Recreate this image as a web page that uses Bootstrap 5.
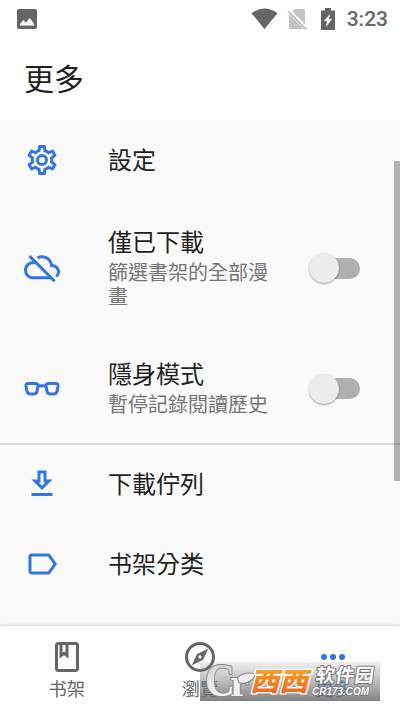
<!DOCTYPE html>
<html lang="zh-Hant">
<head>
<meta charset="utf-8">
<meta name="viewport" content="width=device-width, initial-scale=1">
<title>更多</title>
<link href="https://cdn.jsdelivr.net/npm/bootstrap@5.3.0/dist/css/bootstrap.min.css" rel="stylesheet">
<style>
  body { font-family: Roboto, "Noto Sans CJK SC", sans-serif; color: #1f1f1f; background: #fff; }
  svg { display: block; flex: none; }
  .screen { width: 400px; height: 711px; }
  .status-bar { height: 37px; padding: 0 12px 0 17px; color: #666; }
  .clock { font-size: 21px; font-weight: 500; line-height: 37px; color: #666; margin-left: 11px; padding-top: 1px; }
  .page-title { height: 83px; padding: 1px 24px 0; font-size: 30px; font-weight: 400; line-height: 83px; }
  .prefs { height: 506px; background: #fafafa; }
  .pref { padding: 0 40px 0 24px; }
  .pref-icon { width: 36px; height: 36px; fill: #3375e1; margin-right: 48px; }
  .pref-name { font-size: 24px; line-height: 30px; padding-top: 2px; }
  .pref-name.stacked { padding: 0 0 3px; }
  .pref-note { font-size: 20px; line-height: 24px; color: #757575; }
  .h-a { height: 80px; } .h-b { height: 136px; } .h-c { height: 105px; }
  .h-d { height: 77px; } .h-e { height: 84px; }
  .rule { height: 2px; background: #d9d9d9; margin-top: 2px; }
  .toggle { width: 51px; height: 34px; }
  .toggle-track { width: 40px; height: 21px; border-radius: 11px; background: #b0b0b0; }
  .toggle-knob { width: 30px; height: 30px; background: #ececec; left: 0; top: 2px; box-shadow: 0 1px 2px rgba(0,0,0,.35); }
  .scroll-thumb { width: 6px; height: 320px; right: 0; top: 41px; background: rgba(0,0,0,.29); }
  .tabs { height: 85px; background: #fff; box-shadow: 0 -1px 3px rgba(0,0,0,.16); color: #666; }
  .tab-item { padding-top: 13px; font-size: 18.300px; line-height: 30px; }
  .tab-item svg { width: 36px; height: 36px; fill: #666; }
  .tab-item.on { color: #3375e1; } .tab-item.on svg { fill: #3375e1; }
  .stamp { left: 200px; top: 655px; width: 184px; height: 50px; overflow: visible; }
</style>
<script src="https://cdn.jsdelivr.net/npm/bootstrap@5.3.0/dist/js/bootstrap.bundle.min.js"></script>
</head>
<body class="overflow-hidden">
<div class="screen d-flex flex-column position-relative overflow-hidden">
  <header>
    <div class="status-bar d-flex align-items-center">
      <svg width="20" height="20" viewBox="0 0 20 20"><rect width="20" height="20" rx="2" fill="#666"/><path d="M3 16.500v-1.600l3.400-4 2.400 2.800 4-4.700 4.400 6v1.500z" fill="#fff"/></svg>
      <svg class="ms-auto" width="27" height="22" viewBox="0 0 27 22"><path d="M.5 5.200Q13.500-4 26.500 5.200L13.500 21z" fill="#666"/></svg>
      <svg width="21" height="22" viewBox="0 0 21 22" style="margin-left:9px"><path d="M2 6.500L8 1h8q2 0 2 2v16q0 2-2 2H4q-2 0-2-2z" fill="#c4c4c4"/><path d="M0 1l20 20" stroke="#fff" stroke-width="4"/><path d="M1 3l18.500 18.500" stroke="#bbb" stroke-width="1.700"/></svg>
      <svg width="16" height="22" viewBox="0 0 16 22" style="margin-left:12px"><path d="M1 2.500h4V0h6v2.500h4V22H1z" fill="#666"/><path d="M10 6l-6 7h3l-1 6 6-8H9z" fill="#fff"/></svg>
      <span class="clock">3:23</span>
    </div>
    <h1 class="page-title m-0">更多</h1>
  </header>

  <main class="prefs position-relative overflow-hidden">
    <div class="pref h-a d-flex align-items-center">
      <svg class="pref-icon" viewBox="0 0 24 24"><path d="M19.430 12.980c.04-.32.07-.64.07-.98 0-.34-.03-.66-.07-.98l2.110-1.650c.19-.15.24-.42.12-.64l-2-3.460c-.09-.16-.26-.25-.44-.25-.06 0-.12.01-.17.03l-2.490 1c-.52-.4-1.080-.73-1.690-.98l-.38-2.650C14.460 2.180 14.250 2 14 2h-4c-.25 0-.46.18-.49.42l-.38 2.650c-.61.25-1.170.59-1.690.98l-2.490-1c-.06-.02-.12-.03-.18-.03-.17 0-.34.09-.43.25l-2 3.460c-.13.22-.07.49.12.64l2.110 1.650c-.04.32-.07.65-.07.98 0 .33.03.66.07.98l-2.110 1.650c-.19.15-.24.42-.12.64l2 3.460c.09.16.26.25.44.25.06 0 .12-.01.17-.03l2.490-1c.52.4 1.080.73 1.690.98l.38 2.650c.03.24.24.42.49.42h4c.25 0 .46-.18.49-.42l.38-2.650c.61-.25 1.170-.59 1.690-.98l2.490 1c.06.02.12.03.18.03.17 0 .34-.09.43-.25l2-3.460c.12-.22.07-.49-.12-.64zM17.450 11.270c.04.31.05.52.05.73 0 .21-.02.43-.05.73l-.14 1.130.89.7 1.080.84-.7 1.210-1.270-.51-1.040-.42-.9.68c-.43.32-.84.56-1.250.73l-1.060.43-.16 1.130-.2 1.350h-1.400l-.19-1.350-.16-1.130-1.060-.43c-.43-.18-.83-.41-1.230-.71l-.91-.7-1.060.43-1.270.51-.7-1.210 1.080-.84.89-.7-.14-1.130c-.03-.31-.05-.54-.05-.74s.02-.43.05-.73l.14-1.130-.89-.7-1.080-.84.7-1.210 1.270.51 1.040.42.9-.68c.43-.32.84-.56 1.250-.73l1.060-.43.16-1.130.2-1.350h1.390l.19 1.350.16 1.130 1.060.43c.43.18.83.41 1.230.71l.91.7 1.060-.43 1.270-.51.7 1.210-1.070.85-.89.7zM12 8a4 4 0 100 8 4 4 0 000-8zm0 6a2 2 0 110-4 2 2 0 010 4z" fill-rule="evenodd"/></svg>
      <div class="pref-name">設定</div>
    </div>
    <div class="pref h-b d-flex align-items-center">
      <svg class="pref-icon" viewBox="0 0 24 24"><path transform="translate(0 .5)" d="M19.350 10.040C18.670 6.590 15.640 4 12 4c-1.330 0-2.570.36-3.650.97l1.490 1.490C10.510 6.170 11.230 6 12 6c3.040 0 5.500 2.460 5.500 5.500v.5H19c1.660 0 3 1.340 3 3 0 .99-.48 1.850-1.210 2.400l1.410 1.410c1.090-.92 1.800-2.270 1.800-3.810 0-2.640-2.050-4.780-4.650-4.960zM3 5.270l2.770 2.770h-.42C2.340 8.360 0 10.910 0 14c0 3.310 2.690 6 6 6h11.730l2 2 1.410-1.410L4.410 3.860 3 5.270zM7.730 10l8 8H6c-2.210 0-4-1.790-4-4s1.790-4 4-4h1.730z" style="translate:0 -1px"/></svg>
      <div class="flex-grow-1"><div class="pref-name stacked">僅已下載</div><div class="pref-note">篩選書架的全部漫<br>畫</div></div>
      <div class="toggle position-relative d-flex align-items-center justify-content-end"><div class="toggle-track"></div><div class="toggle-knob position-absolute rounded-circle"></div></div>
    </div>
    <div class="pref h-c d-flex align-items-center">
      <svg class="pref-icon" viewBox="0 0 36 36"><path d="M4 12.500H11q3 0 3 2l-.7 4.500q-.5 4-3.500 4H6.500q-3.200 0-3.900-4L2 14.500q-.2-2 2-2zM32 12.500H25q-3 0-3 2l.7 4.500q.5 4 3.500 4h3.300q3.200 0 3.900-4l.6-4.500q.2-2-2-2zM13.500 15.500q4.500-1.500 9 0" fill="none" stroke="#3375e1" stroke-width="3"/></svg>
      <div class="flex-grow-1"><div class="pref-name stacked">隱身模式</div><div class="pref-note">暫停記錄閱讀歷史</div></div>
      <div class="toggle position-relative d-flex align-items-center justify-content-end"><div class="toggle-track"></div><div class="toggle-knob position-absolute rounded-circle"></div></div>
    </div>
    <div class="rule"></div>
    <div class="pref h-d d-flex align-items-center">
      <svg class="pref-icon" viewBox="0 0 24 24"><path d="M19 9h-4V3H9v6H5l7 7 7-7zm-8 2V5h2v6h1.170L12 13.170 9.830 11H11zm-6 7h14v2H5z"/></svg>
      <div class="pref-name">下載佇列</div>
    </div>
    <div class="pref h-e d-flex align-items-center">
      <svg class="pref-icon" viewBox="0 0 24 24"><path d="M17.630 5.840C17.270 5.330 16.670 5 16 5L5 5.010C3.900 5.010 3 5.900 3 7v10c0 1.100.9 1.990 2 1.990L16 19c.67 0 1.270-.33 1.630-.84L22 12l-4.370-6.160zM16 17H5V7h11l3.550 5L16 17z"/></svg>
      <div class="pref-name">书架分类</div>
    </div>
    <div class="scroll-thumb position-absolute"></div>
  </main>

  <nav class="tabs row g-0 position-relative">
    <div class="tab-item col d-flex flex-column align-items-center">
      <svg viewBox="0 0 24 24"><path d="M18 2H6c-1.100 0-2 .9-2 2v16c0 1.100.9 2 2 2h12c1.100 0 2-.9 2-2V4c0-1.100-.9-2-2-2zM9 4h2v5l-1-.75L9 9V4zm9 16H6V4h1v9l3-2.250L13 13V4h5v16z"/></svg>
      <span>书架</span>
    </div>
    <div class="tab-item col d-flex flex-column align-items-center">
      <svg viewBox="0 0 24 24"><path d="M12 2a10 10 0 100 20 10 10 0 000-20zm0 18a8 8 0 110-16 8 8 0 010 16zm-5.500-2.500l7.510-3.490L17.500 6.500 9.990 9.990 6.500 17.500zm5.500-6.600a1.100 1.100 0 110 2.200 1.100 1.100 0 010-2.200z"/></svg>
      <span>瀏覽</span>
    </div>
    <div class="tab-item on col d-flex flex-column align-items-center">
      <svg viewBox="0 0 24 24"><path d="M6 10a2 2 0 100 4 2 2 0 000-4zm12 0a2 2 0 100 4 2 2 0 000-4zm-6 0a2 2 0 100 4 2 2 0 000-4z"/></svg>
      <span>更多</span>
    </div>
  </nav>

  <svg class="stamp position-absolute" viewBox="0 0 184 50">
    <defs>
      <linearGradient id="shade" x2="0" y2="1"><stop stop-color="#777" stop-opacity=".12"/><stop offset="1" stop-color="#666" stop-opacity=".82"/></linearGradient>
      <linearGradient id="flame" x2="0" y2="1"><stop stop-color="#fbb52c"/><stop offset="1" stop-color="#ee5a1c"/></linearGradient>
      <linearGradient id="silver" x2="0" y2="1"><stop stop-color="#c8c8c8"/><stop offset="1" stop-color="#fff"/></linearGradient>
    </defs>
    <rect y="7" width="180" height="39" fill="url(#shade)"/>
    <g stroke="#888" stroke-width="2" paint-order="stroke" stroke-linejoin="round" font-family="Liberation Serif, serif" font-weight="700">
      <text x="5" y="41" font-size="47" textLength="30" lengthAdjust="spacingAndGlyphs" fill="url(#silver)">C</text>
      <text x="30" y="41" font-size="38" textLength="19" lengthAdjust="spacingAndGlyphs" fill="#f0f0f0">r</text>
      <path d="M38 23Q43 17 55 19Q50 30 39 27z" fill="#f0f0f0"/>
    </g>
    <g font-family="Noto Sans CJK SC, sans-serif" font-weight="900" paint-order="stroke" stroke-linejoin="round">
      <text transform="translate(50 36) skewX(-14) scale(1.120 1)" font-size="26" fill="url(#flame)" stroke="#fff" stroke-width="2.500">西西</text>
      <text transform="translate(115 27) skewX(-8)" font-size="19" textLength="58" font-weight="700" fill="#fff" stroke="#777" stroke-width="2">软件园</text>
    </g>
    <text x="112" y="40" font-family="Liberation Sans, sans-serif" font-style="italic" font-weight="700" font-size="11.500" textLength="57" lengthAdjust="spacingAndGlyphs" fill="#fff" stroke="#777" stroke-width="1.500" paint-order="stroke">CR173.COM</text>
  </svg>
</div>
</body>
</html>
